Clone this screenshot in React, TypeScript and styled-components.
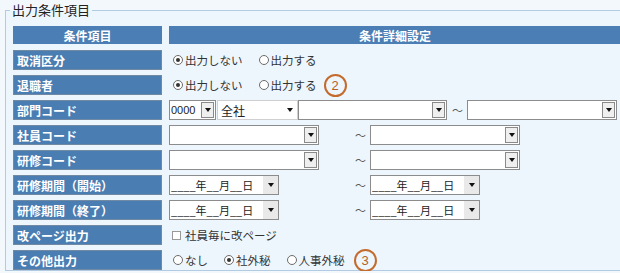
import React from 'react';
import styled, { createGlobalStyle } from 'styled-components';

const GlobalStyle = createGlobalStyle`
  html, body {
    margin: 0;
    padding: 0;
    background: #f3f8fd;
    overflow: hidden;
  }
  body {
    font-family: "Noto Sans CJK JP", "Noto Sans", sans-serif;
    color: #333;
  }
`;

const Panel = styled.fieldset`
  margin: 2px 0 0 5px;
  padding: 8px 7px 0 7px;
  border: 1px solid #b3cbe2;
  width: 608px;
  background: #eef6fd;
`;

const Legend = styled.legend`
  margin-left: -3px;
  padding: 0 2px;
  font-size: 13px;
  line-height: 16px;
  color: #222;
`;

const Table = styled.div`
  display: grid;
  grid-template-columns: 149px 452px;
  column-gap: 7px;
  row-gap: 5px;
`;

const HeadCell = styled.div`
  height: 18px;
  margin-bottom: 1px;
  background: #4a7eb4;
  color: #fff;
  font-size: 12px;
  font-weight: bold;
  display: flex;
  align-items: center;
  justify-content: center;
`;

const LabelCell = styled.div`
  box-sizing: border-box;
  height: 20px;
  background: #4a7db2;
  border: 1px solid #7189a3;
  color: #fff;
  font-size: 12px;
  font-weight: bold;
  padding-left: 3px;
  display: flex;
  align-items: center;
  white-space: nowrap;
`;

const ValueCell = styled.div<{ $pad?: number }>`
  height: 20px;
  padding-left: ${p => p.$pad ?? 0}px;
  display: flex;
  align-items: center;
  font-size: 11.5px;
  white-space: nowrap;
`;

const Option = styled.span<{ $last?: boolean }>`
  display: inline-flex;
  align-items: center;
  margin-right: ${p => (p.$last ? 0 : 16)}px;
`;

const RadioMark = styled.span<{ $on?: boolean }>`
  box-sizing: border-box;
  width: 10px;
  height: 10px;
  margin-right: 2px;
  border: 1px solid #6b6b6b;
  border-radius: 50%;
  background: #fff;
  display: inline-flex;
  align-items: center;
  justify-content: center;

  &::after {
    content: '';
    width: 4px;
    height: 4px;
    border-radius: 50%;
    background: ${p => (p.$on ? '#333' : 'transparent')};
  }
`;

const CheckMark = styled.span`
  box-sizing: border-box;
  width: 9px;
  height: 9px;
  margin-right: 4px;
  border: 1px solid #999;
  background: #fff;
`;

const Badge = styled.span<{ $gap: number }>`
  box-sizing: border-box;
  width: 23px;
  height: 23px;
  margin-left: ${p => p.$gap}px;
  border: 2px solid #c46a2c;
  border-radius: 50%;
  color: #b85f26;
  font-family: "Liberation Sans", Arial, sans-serif;
  font-size: 13px;
  display: inline-flex;
  align-items: center;
  justify-content: center;
`;

const Select = styled.div<{ $w: number; $soft?: boolean; $gapL?: number }>`
  box-sizing: border-box;
  width: ${p => p.$w}px;
  height: 20px;
  flex: none;
  margin-left: ${p => p.$gapL ?? 0}px;
  background: #fff;
  border: 1px solid ${p => (p.$soft ? '#d0d0d0' : '#8c8c8c')};
  display: flex;
  align-items: center;
  color: #222;
`;

const SelectText = styled.span<{ $kind?: 'code' | 'date' }>`
  flex: 1;
  padding-left: ${p => (p.$kind ? 1 : 3)}px;
  font-family: ${p =>
    p.$kind === 'code' ? '"Liberation Sans", Arial, sans-serif' : 'inherit'};
  font-size: ${p => (p.$kind ? 11 : 12)}px;
`;

const ArrowBox = styled.span`
  box-sizing: border-box;
  width: 13px;
  height: 16px;
  margin-right: 1px;
  border: 1px solid #8a8a8a;
  background: #efefef;
  display: flex;
  align-items: center;
  justify-content: center;
`;

const ArrowPlain = styled.span<{ $grey?: boolean }>`
  width: 15px;
  align-self: stretch;
  background: ${p => (p.$grey ? '#e9e9e9' : 'transparent')};
  display: flex;
  align-items: center;
  justify-content: center;
`;

const Tri = styled.span`
  width: 0;
  height: 0;
  border-left: 3.5px solid transparent;
  border-right: 3.5px solid transparent;
  border-top: 4px solid #111;
`;

const Tilde = styled.span<{ $l: number; $r: number }>`
  margin: 0 ${p => p.$r}px 0 ${p => p.$l}px;
  font-size: 11px;
  color: #555;
`;

const Combo = ({ w }: { w: number }) => (
  <Select $w={w}>
    <SelectText />
    <ArrowBox>
      <Tri />
    </ArrowBox>
  </Select>
);

const DateCombo = () => (
  <Select $w={110}>
    <SelectText $kind="date">____年__月__日</SelectText>
    <ArrowPlain $grey>
      <Tri />
    </ArrowPlain>
  </Select>
);

const Radio = ({ on, last, children }: { on?: boolean; last?: boolean; children: React.ReactNode }) => (
  <Option $last={last}>
    <RadioMark $on={on} />
    {children}
  </Option>
);

const Range = ({ left, right, gap }: { left: React.ReactNode; right: React.ReactNode; gap: number }) => (
  <>
    {left}
    <Tilde $l={gap} $r={4}>～</Tilde>
    {right}
  </>
);

export default function App() {
  return (
    <>
      <GlobalStyle />
      <Panel>
        <Legend>出力条件項目</Legend>
        <Table>
          <HeadCell>条件項目</HeadCell>
          <HeadCell>条件詳細設定</HeadCell>

          <LabelCell>取消区分</LabelCell>
          <ValueCell $pad={4}>
            <Radio on>出力しない</Radio>
            <Radio>出力する</Radio>
          </ValueCell>

          <LabelCell>退職者</LabelCell>
          <ValueCell $pad={4}>
            <Radio on>出力しない</Radio>
            <Radio last>出力する</Radio>
            <Badge $gap={7}>2</Badge>
          </ValueCell>

          <LabelCell>部門コード</LabelCell>
          <ValueCell>
            <Select $w={47}>
              <SelectText $kind="code">0000</SelectText>
              <ArrowBox>
                <Tri />
              </ArrowBox>
            </Select>
            <Select $w={81} $soft $gapL={1}>
              <SelectText>全社</SelectText>
              <ArrowPlain>
                <Tri />
              </ArrowPlain>
            </Select>
            <Range gap={5} left={<Combo w={149} />} right={<Combo w={150} />} />
          </ValueCell>

          <LabelCell>社員コード</LabelCell>
          <ValueCell>
            <Range gap={36} left={<Combo w={150} />} right={<Combo w={150} />} />
          </ValueCell>

          <LabelCell>研修コード</LabelCell>
          <ValueCell>
            <Range gap={36} left={<Combo w={150} />} right={<Combo w={150} />} />
          </ValueCell>

          <LabelCell>研修期間（開始）</LabelCell>
          <ValueCell>
            <Range gap={76} left={<DateCombo />} right={<DateCombo />} />
          </ValueCell>

          <LabelCell>研修期間（終了）</LabelCell>
          <ValueCell>
            <Range gap={76} left={<DateCombo />} right={<DateCombo />} />
          </ValueCell>

          <LabelCell>改ページ出力</LabelCell>
          <ValueCell $pad={3}>
            <CheckMark />
            社員毎に改ページ
          </ValueCell>

          <LabelCell>その他出力</LabelCell>
          <ValueCell $pad={4}>
            <Radio>なし</Radio>
            <Radio on>社外秘</Radio>
            <Radio last>人事外秘</Radio>
            <Badge $gap={9}>3</Badge>
          </ValueCell>
        </Table>
      </Panel>
    </>
  );
}
